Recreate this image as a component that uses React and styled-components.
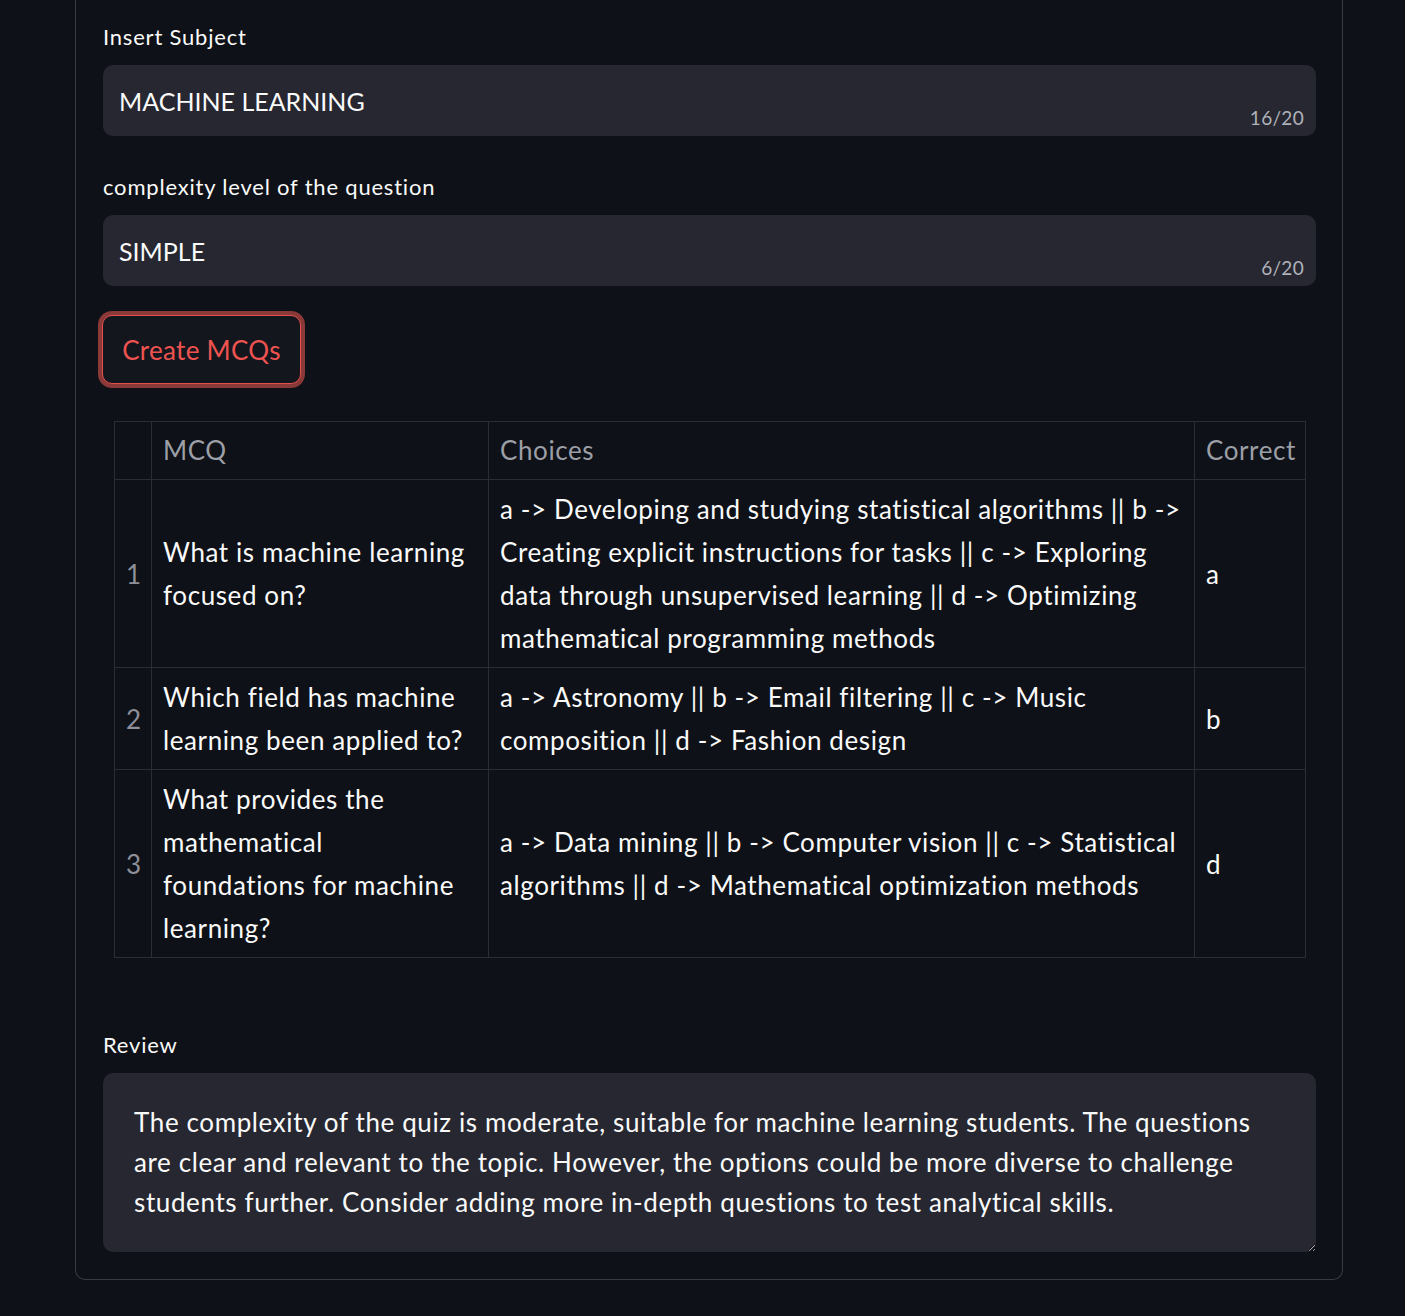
import React from 'react';
import styled, { createGlobalStyle } from 'styled-components';

const GlobalStyle = createGlobalStyle`
  html, body {
    margin: 0;
    padding: 0;
    background: #0e1117;
  }
  body {
    font-family: Lato, "Liberation Sans", sans-serif;
    color: #fafafa;
  }
`;

const Page = styled.div`
  min-height: 1316px;
  background: #0e1117;
`;

const Form = styled.div`
  margin-left: 75px;
  width: 1268px;
  border: 1px solid #3a3c43;
  border-top: none;
  border-radius: 0 0 10px 10px;
  padding: 22px 26px 27px 27px;
  box-sizing: border-box;
  display: flex;
  flex-direction: column;
`;

const Label = styled.div`
  font-size: 22px;
  line-height: 30px;
  height: 30px;
  margin-bottom: 13px;
  letter-spacing: 0.8px;
  color: #fafafa;
  margin-top: ${p => p.$top || 0}px;
`;

const InputBox = styled.div`
  position: relative;
  height: 71px;
  background: #262730;
  border-radius: 10px;
  display: flex;
  align-items: center;
  padding-left: 16px;
  font-size: 25px;
  color: #fafafa;
`;

const Counter = styled.span`
  position: absolute;
  right: 12px;
  bottom: 7px;
  font-size: 19px;
  letter-spacing: 0.3px;
  color: #b0b3ba;
`;

const Button = styled.button`
  align-self: flex-start;
  margin-top: 29px;
  margin-left: -1px;
  height: 69px;
  width: 199px;
  border-radius: 10px;
  border: 1px solid #e0504d;
  box-shadow: 0 0 0 4px #8a3838;
  background: #13161d;
  color: #ee5350;
  font-family: inherit;
  font-size: 26px;
  letter-spacing: 0.3px;
  cursor: pointer;
`;

const Table = styled.table`
  margin: 37px 11px 0 11px;
  border-collapse: collapse;
  table-layout: fixed;
  width: 1191px;
  font-size: 26px;
  line-height: 43px;
  letter-spacing: 0.6px;
`;

const Th = styled.th`
  border: 1px solid #2b2d34;
  text-align: left;
  font-weight: 400;
  color: #9c9fa6;
  padding: 7px 11px 7px 11px;
`;

const Td = styled.td`
  border: 1px solid #2b2d34;
  padding: 8px ${p => p.$pr || 11}px 7px 11px;
  vertical-align: middle;
  color: ${p => (p.$index ? '#8d9098' : '#fafafa')};
  text-align: ${p => (p.$index ? 'right' : 'left')};
`;

const ReviewArea = styled.textarea`
  height: 179px;
  box-sizing: border-box;
  background: #262730;
  border: none;
  border-radius: 10px;
  padding: 29px 30px 10px 31px;
  font-family: inherit;
  font-size: 26px;
  line-height: 40px;
  letter-spacing: 0.62px;
  color: #fafafa;
  resize: vertical;
  outline: none;
`;

const columns = [
  { label: '', width: 37 },
  { label: 'MCQ', width: 337 },
  { label: 'Choices', width: 706 },
  { label: 'Correct', width: 111 },
];

const rows = [
  {
    q: 'What is machine learning focused on?',
    c: 'a -> Developing and studying statistical algorithms || b -> Creating explicit instructions for tasks || c -> Exploring data through unsupervised learning || d -> Optimizing mathematical programming methods',
    a: 'a',
  },
  {
    q: 'Which field has machine learning been applied to?',
    c: 'a -> Astronomy || b -> Email filtering || c -> Music composition || d -> Fashion design',
    a: 'b',
  },
  {
    q: 'What provides the mathematical foundations for machine learning?',
    c: 'a -> Data mining || b -> Computer vision || c -> Statistical algorithms || d -> Mathematical optimization methods',
    a: 'd',
  },
];

const review =
  'The complexity of the quiz is moderate, suitable for machine learning students. The questions are clear and relevant to the topic. However, the options could be more diverse to challenge students further. Consider adding more in-depth questions to test analytical skills.';

export default function App() {
  return (
    <Page>
      <GlobalStyle />
      <Form>
        <Label>Insert Subject</Label>
        <InputBox>
          MACHINE LEARNING
          <Counter>16/20</Counter>
        </InputBox>
        <Label $top={36}>complexity level of the question</Label>
        <InputBox>
          SIMPLE
          <Counter>6/20</Counter>
        </InputBox>
        <Button>Create MCQs</Button>
        <Table>
          <colgroup>
            {columns.map((c, i) => (
              <col key={i} style={{ width: c.width }} />
            ))}
          </colgroup>
          <thead>
            <tr>
              {columns.map((c, i) => (
                <Th key={i}>{c.label}</Th>
              ))}
            </tr>
          </thead>
          <tbody>
            {rows.map((r, i) => (
              <tr key={i}>
                <Td $index>{i + 1}</Td>
                <Td $pr={19}>{r.q}</Td>
                <Td>{r.c}</Td>
                <Td>{r.a}</Td>
              </tr>
            ))}
          </tbody>
        </Table>
        <Label $top={72}>Review</Label>
        <ReviewArea readOnly value={review} />
      </Form>
    </Page>
  );
}
